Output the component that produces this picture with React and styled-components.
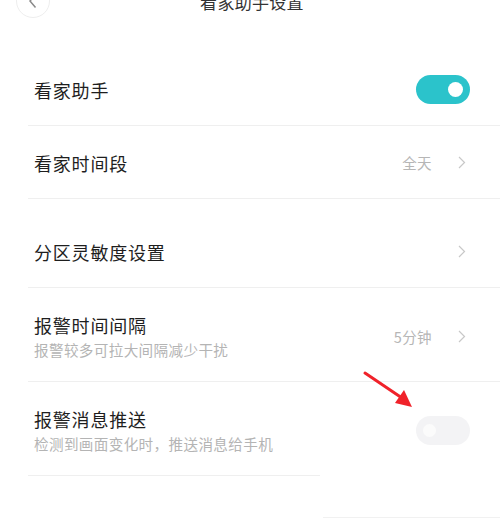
import React from 'react';
import styled, { createGlobalStyle } from 'styled-components';

const GlobalStyle = createGlobalStyle`
   html, body {
      margin: 0;
      padding: 0;
      background: #ffffff;
   }
   body {
      font-family: "Noto Sans CJK SC", "Noto Sans", sans-serif;
      overflow: hidden;
   }
`;

const Page = styled.div`
   position: relative;
   width: 500px;
   height: 531px;
   overflow: hidden;
   background: #ffffff;
`;

const Header = styled.div`
   display: grid;
   grid-template-columns: 1fr auto 1fr;
   align-items: center;
   height: 38px;
   margin-top: -18px;
   padding: 0 16px;
`;

const BackButton = styled.div`
   display: flex;
   align-items: center;
   justify-content: center;
   width: 34px;
   height: 34px;
   border: 1px solid #eeeeee;
   border-radius: 50%;
   box-sizing: border-box;
`;

const HeaderTitle = styled.div`
   padding-left: 4px;
   font-size: 17px;
   color: #333333;
   letter-spacing: 0.3px;
`;

const List = styled.div`
   margin-top: 33px;
`;

/* $cut: the row's bottom line stops that many px short of the right edge */
const Row = styled.div`
   position: relative;
   display: flex;
   align-items: center;
   justify-content: space-between;
   box-sizing: border-box;
   min-height: ${(p) => (p.$sub ? 0 : 73)}px;
   margin-top: ${(p) => p.$gap || 0}px;
   margin-left: 28px;
   padding: ${(p) => (p.$sub ? '25px 30px 22px 6px' : '0 30px 0 6px')};
   &::after {
      content: '';
      position: absolute;
      left: 0;
      right: ${(p) => p.$cut || 0}px;
      bottom: 0;
      height: 1px;
      background: #efefef;
   }
`;

const TextCol = styled.div`
   display: flex;
   flex-direction: column;
`;

const Title = styled.div`
   font-size: 18px;
   line-height: 24px;
   letter-spacing: 0.8px;
   color: #1e1e1e;
`;

const Sub = styled.div`
   margin-top: 3px;
   font-size: 14.6px;
   line-height: 20px;
   letter-spacing: 0.35px;
   color: #b4b4b4;
   white-space: nowrap;
`;

const Right = styled.div`
   display: flex;
   align-items: center;
   gap: 26px;
   padding-right: 4px;
`;

const Value = styled.span`
   font-size: 14.5px;
   letter-spacing: 0.4px;
   color: #b6b6b6;
`;

const Switch = styled.div`
   position: relative;
   width: 54px;
   height: 29px;
   border-radius: 15px;
   background: ${(p) => (p.$on ? '#2bc3cb' : '#f3f3f5')};
   &::after {
      content: '';
      position: absolute;
      top: ${(p) => (p.$on ? 7 : 8)}px;
      left: ${(p) => (p.$on ? 32 : 7)}px;
      width: ${(p) => (p.$on ? 15 : 13)}px;
      height: ${(p) => (p.$on ? 15 : 13)}px;
      border-radius: 50%;
      background: ${(p) => (p.$on ? '#ffffff' : '#fbfbfb')};
   }
`;

const Patch = styled.div`
   height: 41px;
   margin-left: 323px;
   border-bottom: 1px solid #f1f1f1;
`;

const Pointer = styled.svg`
   position: absolute;
   left: 360px;
   top: 368px;
`;

const Chevron = () => (
   <svg width="8" height="13" viewBox="0 0 8 13">
      <path d="M1 1 L6.5 6.5 L1 12" fill="none" stroke="#c8c8c8" strokeWidth="1.2" />
   </svg>
);

const BackChevron = () => (
   <svg width="10" height="16" viewBox="0 0 10 16">
      <path d="M7.5 1.5 L2 8 L7.5 14.5" fill="none" stroke="#8a8a8a" strokeWidth="1.5" />
   </svg>
);

const App = () => {
   return (
      <>
         <GlobalStyle />
         <Page>
            <Header>
               <BackButton>
                  <BackChevron />
               </BackButton>
               <HeaderTitle>看家助手设置</HeaderTitle>
               <span />
            </Header>

            <List>
               <Row>
                  <Title>看家助手</Title>
                  <Switch $on />
               </Row>
               <Row>
                  <Title>看家时间段</Title>
                  <Right>
                     <Value>全天</Value>
                     <Chevron />
                  </Right>
               </Row>
               <Row $gap={16}>
                  <Title>分区灵敏度设置</Title>
                  <Right>
                     <Chevron />
                  </Right>
               </Row>
               <Row $sub>
                  <TextCol>
                     <Title>报警时间间隔</Title>
                     <Sub>报警较多可拉大间隔减少干扰</Sub>
                  </TextCol>
                  <Right>
                     <Value>5分钟</Value>
                     <Chevron />
                  </Right>
               </Row>
               <Row $sub $cut={180}>
                  <TextCol>
                     <Title>报警消息推送</Title>
                     <Sub>检测到画面变化时，推送消息给手机</Sub>
                  </TextCol>
                  <Switch />
               </Row>
               <Patch />
            </List>

            <Pointer width="60" height="45" viewBox="0 0 60 45">
               <line x1="5" y1="5" x2="42" y2="30" stroke="#f0222a" strokeWidth="3" strokeLinecap="round" />
               <polygon points="52,39 35,35 44,22" fill="#f0222a" />
            </Pointer>
         </Page>
      </>
   );
};

export default App;
